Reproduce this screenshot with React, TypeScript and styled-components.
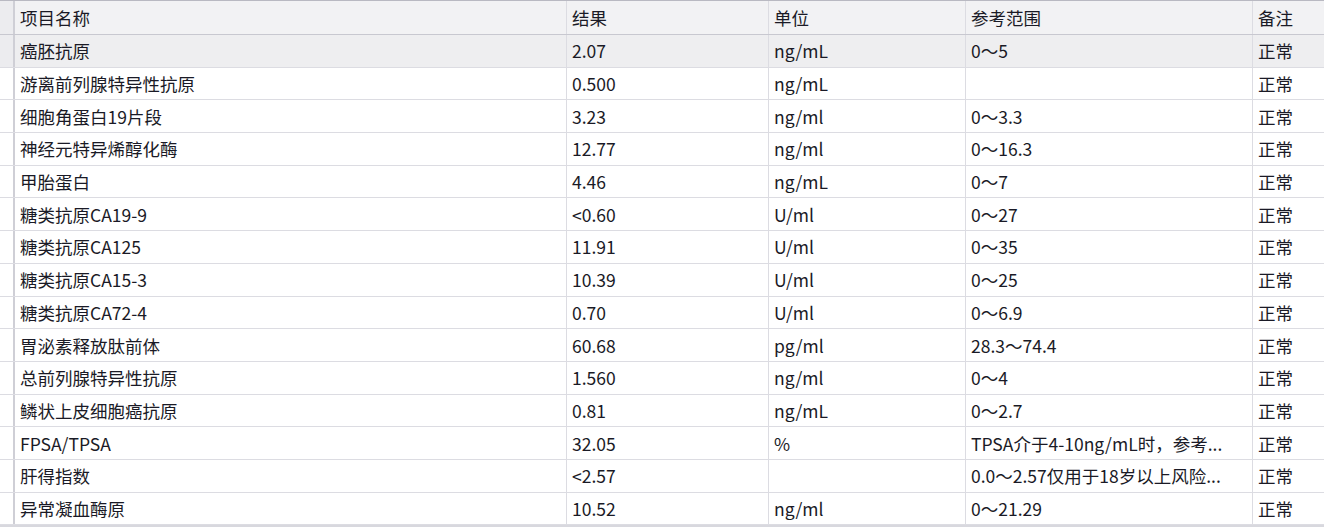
import React from 'react';
import styled, { createGlobalStyle } from 'styled-components';

const Global = createGlobalStyle`
  body { margin: 0; background: #fff; font-family: "Noto Sans CJK SC", "Liberation Sans", sans-serif; }
`;

const cols = '15px 552px 202px 197px 287px 71px';

const Table = styled.div`
  width: 1324px;
  border-top: 1px solid #b9b9c2;
  border-bottom: 2px solid #d8d8de;
`;

const Row = styled.div<{ $head?: boolean; $sel?: boolean }>`
  display: grid;
  grid-template-columns: ${cols};
  height: ${(p) => (p.$head ? '34px' : '32.7px')};
  background: ${(p) => (p.$head ? '#f2f2f4' : p.$sel ? '#eeeef0' : '#fff')};
  border-bottom: 1px solid ${(p) => (p.$head ? '#c8c8d0' : '#dcdce2')};
  box-sizing: border-box;
`;

const Gutter = styled.div<{ $grey?: boolean }>`
  border-right: 2px solid #cfcfd6;
  background: ${(p) => (p.$grey ? '#ececef' : '#fff')};
`;

const Cell = styled.div`
  display: flex;
  align-items: center;
  padding-left: 5px;
  border-right: 1px solid #dcdce2;
  font-size: 17.5px;
  color: #1a1a26;
  white-space: nowrap;
  overflow: hidden;
  &:last-child { border-right: none; }
`;

const data: string[][] = [
  ['癌胚抗原', '2.07', 'ng/mL', '0～5'],
  ['游离前列腺特异性抗原', '0.500', 'ng/mL', ''],
  ['细胞角蛋白19片段', '3.23', 'ng/ml', '0～3.3'],
  ['神经元特异烯醇化酶', '12.77', 'ng/ml', '0～16.3'],
  ['甲胎蛋白', '4.46', 'ng/mL', '0～7'],
  ['糖类抗原CA19-9', '<0.60', 'U/ml', '0～27'],
  ['糖类抗原CA125', '11.91', 'U/ml', '0～35'],
  ['糖类抗原CA15-3', '10.39', 'U/ml', '0～25'],
  ['糖类抗原CA72-4', '0.70', 'U/ml', '0～6.9'],
  ['胃泌素释放肽前体', '60.68', 'pg/ml', '28.3～74.4'],
  ['总前列腺特异性抗原', '1.560', 'ng/ml', '0～4'],
  ['鳞状上皮细胞癌抗原', '0.81', 'ng/mL', '0～2.7'],
  ['FPSA/TPSA', '32.05', '%', 'TPSA介于4-10ng/mL时，参考...'],
  ['肝得指数', '<2.57', '', '0.0～2.57仅用于18岁以上风险...'],
  ['异常凝血酶原', '10.52', 'ng/ml', '0～21.29'],
];

export default function App() {
  return (
    <>
      <Global />
      <Table>
        <Row $head>
          <Gutter $grey />
          <Cell>项目名称</Cell>
          <Cell>结果</Cell>
          <Cell>单位</Cell>
          <Cell>参考范围</Cell>
          <Cell>备注</Cell>
        </Row>
        {data.map((r, i) => (
          <Row key={i} $sel={i === 0}>
            <Gutter $grey={i === 0} />
            <Cell>{r[0]}</Cell>
            <Cell>{r[1]}</Cell>
            <Cell>{r[2]}</Cell>
            <Cell>{r[3]}</Cell>
            <Cell>正常</Cell>
          </Row>
        ))}
      </Table>
    </>
  );
}
